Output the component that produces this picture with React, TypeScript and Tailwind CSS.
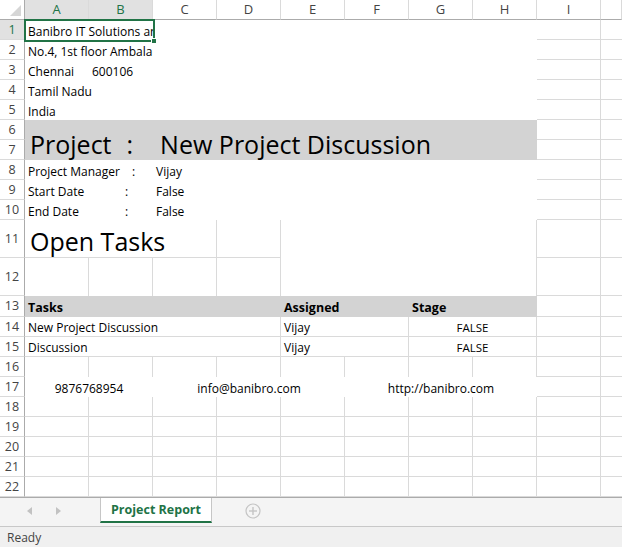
import React from "react";

const SPAN: Record<number, string> = {
  1: "",
  2: "col-span-2",
  3: "col-span-3",
  4: "col-span-4",
  5: "col-span-5",
  6: "col-span-6",
  8: "col-span-8",
};
const BORD: Record<string, string> = {
  rb: "border-r border-b border-[#dadada]",
  r: "border-r border-[#dadada]",
  b: "border-b border-[#dadada]",
  n: "",
};

function C({
  span = 1,
  rs = 1,
  b = "rb",
  className = "",
  children,
}: {
  span?: number;
  rs?: number;
  b?: string;
  className?: string;
  children?: React.ReactNode;
}) {
  return (
    <div
      className={`${SPAN[span]} ${rs === 2 ? "row-span-2" : ""} ${BORD[b]} flex items-center pt-[3px] min-w-0 whitespace-nowrap ${className}`}
    >
      {children}
    </div>
  );
}

function RH({ n, sel = false }: { n: number; sel?: boolean }) {
  return (
    <div
      className={`border-r border-b border-r-[#ababab] border-b-[#dadada] flex items-center justify-center pt-[1px] text-[12.5px] ${
        sel ? "bg-[#e1e1e1] text-[#217346]" : "text-[#444444]"
      }`}
    >
      {n}
    </div>
  );
}

function Tail() {
  return (
    <>
      <C />
      <C b="b" />
    </>
  );
}

const cols = ["A", "B", "C", "D", "E", "F", "G", "H", "I", ""];

export default function App() {
  const emptyRow = (n: number) => (
    <React.Fragment key={n}>
      <RH n={n} />
      {Array.from({ length: 8 }).map((_, i) => (
        <C key={i} />
      ))}
      <Tail />
    </React.Fragment>
  );

  return (
    <div className="w-[622px] h-[547px] overflow-hidden bg-white font-['Open_Sans',sans-serif] text-black flex flex-col">
      <div className="relative h-[497px] shrink-0">
        <div className="grid grid-cols-[25px_repeat(9,64px)_1fr] grid-rows-[20px_repeat(10,20px)_38px_38px_21px_repeat(9,20px)] h-[497px] text-[12px]">
          {/* header row */}
          <div className="border-r border-b border-[#ababab] relative">
            <svg className="absolute right-[3px] bottom-[3px]" width="11" height="11" viewBox="0 0 11 11">
              <polygon points="11,0 11,11 0,11" fill="#d6d6d6" />
            </svg>
          </div>
          {cols.map((c, i) => (
            <div
              key={i}
              className={`border-r border-b border-r-[#dadada] border-b-[#ababab] flex items-center justify-center pt-[1px] text-[13px] ${
                i < 2 ? "bg-[#e1e1e1] text-[#217346]" : "text-[#444444]"
              }`}
            >
              {c}
            </div>
          ))}

          {/* row 1 */}
          <RH n={1} sel />
          <C span={2} b="n" className="overflow-hidden pl-[3px]">
            Banibro IT Solutions and Services
          </C>
          <C span={6} b="n" />
          <Tail />

          {/* row 2 */}
          <RH n={2} />
          <C span={2} b="n" className="overflow-hidden pl-[3px]">
            No.4, 1st floor Ambalan Building
          </C>
          <C span={6} b="n" />
          <Tail />

          {/* row 3 */}
          <RH n={3} />
          <C b="n" className="pl-[3px]">Chennai</C>
          <C b="n" className="pl-[3px]">600106</C>
          <C span={6} b="n" />
          <Tail />

          {/* row 4 */}
          <RH n={4} />
          <C span={8} b="n" className="pl-[3px]">Tamil Nadu</C>
          <Tail />

          {/* row 5 */}
          <RH n={5} />
          <C span={8} b="n" className="pl-[3px]">India</C>
          <Tail />

          {/* rows 6-7 */}
          <RH n={6} />
          <C span={8} rs={2} b="n" className="bg-[#d3d3d3] !items-end !pt-0 pl-[5px] text-[25px] leading-[32px]">
            <span>Project</span>
            <span className="ml-[15px]">:</span>
            <span className="ml-[27px]">New Project Discussion</span>
          </C>
          <Tail />
          <RH n={7} />
          <Tail />

          {/* rows 8-10 */}
          {[
            ["Project Manager", "Vijay", 104],
            ["Start Date", "False", 97],
            ["End Date", "False", 97],
          ].map(([label, val, w], i) => (
            <React.Fragment key={i}>
              <RH n={8 + i} />
              <C span={2} b="n" className="pl-[3px]">
                <span className="inline-block" style={{ width: w as number }}>
                  {label}
                </span>
                <span>:</span>
              </C>
              <C b="n" className="pl-[3px]">{val}</C>
              <C span={5} b="n" />
              <Tail />
            </React.Fragment>
          ))}

          {/* row 11 */}
          <RH n={11} />
          <C span={3} className="!items-end !pt-0 pl-[5px] text-[25px] leading-[32px]">
            Open Tasks
          </C>
          <C />
          <C span={4} rs={2} b="r" />
          <Tail />

          {/* row 12 */}
          <RH n={12} />
          <C b="r" />
          <C b="r" />
          <C b="r" />
          <C b="r" />
          <Tail />

          {/* row 13 */}
          <RH n={13} />
          <C span={4} b="n" className="bg-[#d3d3d3] pl-[3px] font-bold text-[12.5px]">Tasks</C>
          <C span={2} b="n" className="bg-[#d3d3d3] pl-[3px] font-bold text-[12.5px]">Assigned</C>
          <C span={2} b="n" className="bg-[#d3d3d3] pl-[3px] font-bold text-[12.5px]">Stage</C>
          <Tail />

          {/* rows 14-15 */}
          {["New Project Discussion", "Discussion"].map((t, i) => (
            <React.Fragment key={t}>
              <RH n={14 + i} />
              <C span={4} className="pl-[3px]">{t}</C>
              <C span={2} className="pl-[3px]">Vijay</C>
              <C span={2} className="justify-center text-[11.5px]">FALSE</C>
              <Tail />
            </React.Fragment>
          ))}

          {/* row 16 */}
          <RH n={16} />
          {Array.from({ length: 8 }).map((_, i) => (
            <C key={i} b="r" />
          ))}
          <Tail />

          {/* row 17 */}
          <RH n={17} />
          <C span={2} b="n" className="justify-center">9876768954</C>
          <C span={3} b="n" className="justify-center">info@banibro.com</C>
          <C span={3} b="n" className="justify-center">http://banibro.com</C>
          <Tail />

          {[18, 19, 20, 21, 22].map((n) => emptyRow(n))}
        </div>

        {/* selection */}
        <div className="absolute left-[24px] top-[19px] w-[131px] h-[23px] border-2 border-[#217346] pointer-events-none" />
        <div className="absolute left-[151px] top-[38px] w-[6px] h-[6px] bg-[#217346] border border-white" />
      </div>

      {/* sheet tabs */}
      <div className="h-[29px] shrink-0 bg-[#f4f4f4] border-t border-[#ababab] flex items-start">
        <div className="w-[100px] h-[25px] flex items-center pt-[1px]">
          <svg className="ml-[27px]" width="5" height="8" viewBox="0 0 5 8">
            <polygon points="5,0 5,8 0,4" fill="#c2c2c2" />
          </svg>
          <svg className="ml-[24px]" width="5" height="8" viewBox="0 0 5 8">
            <polygon points="0,0 0,8 5,4" fill="#c2c2c2" />
          </svg>
        </div>
        <div className="w-[112px] h-[25px] bg-white border-l border-r border-[#c6c6c6] border-b-2 border-b-[#217346] flex items-center justify-center pt-[1px] text-[#217346] font-bold text-[12.5px]">
          Project Report
        </div>
        <div className="h-[25px] flex items-center ml-[33px] pt-[1px]">
          <svg width="16" height="16" viewBox="0 0 16 16">
            <circle cx="8" cy="8" r="7" fill="none" stroke="#c4c4c4" strokeWidth="1.2" />
            <line x1="8" y1="4" x2="8" y2="12" stroke="#c4c4c4" strokeWidth="1.4" />
            <line x1="4" y1="8" x2="12" y2="8" stroke="#c4c4c4" strokeWidth="1.4" />
          </svg>
        </div>
      </div>

      {/* status bar */}
      <div className="h-[21px] shrink-0 bg-[#f0f0f0] border-t border-[#c8c8c8] flex items-center pl-[7px] pt-[1px] text-[12px] text-[#444444]">
        Ready
      </div>
    </div>
  );
}
